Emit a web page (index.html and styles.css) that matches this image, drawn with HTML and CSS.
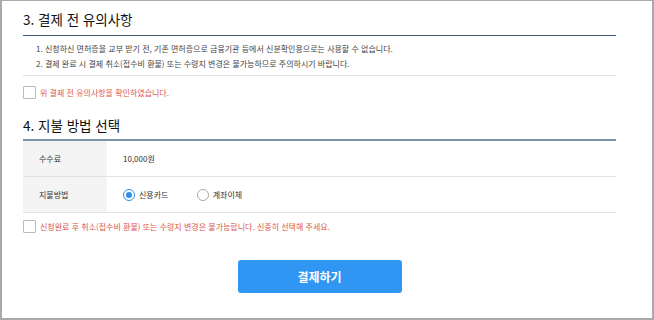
FILE: index.html
```html
<!DOCTYPE html>
<html lang="ko">
<head>
  <meta charset="UTF-8">
  <title>결제</title>
  <link rel="stylesheet" href="styles.css">
</head>
<body>
<div class="frame">
  <div class="section">
    <h2 class="title">3. 결제 전 유의사항</h2>
    <ol class="notice">
      <li>1. 신청하신 면허증을 교부 받기 전, 기존 면허증으로 금융기관 등에서 신분확인용으로는 사용할 수 없습니다.</li>
      <li>2. 결제 완료 시 결제 취소(접수비 환불) 또는 수령지 변경은 불가능하므로 주의하시기 바랍니다.</li>
    </ol>
    <label class="agree"><span class="box"></span>위 결제 전 유의사항을 확인하였습니다.</label>
  </div>

  <div class="section">
    <h2 class="title plain">4. 지불 방법 선택</h2>
    <table class="pay">
      <tr>
        <th>수수료</th>
        <td>10,000원</td>
      </tr>
      <tr>
        <th>지불방법</th>
        <td>
          <span class="radio on"></span><span class="opt">신용카드</span>
          <span class="radio"></span><span class="opt">계좌이체</span>
        </td>
      </tr>
    </table>
    <label class="agree second"><span class="box"></span>신청완료 후 취소(접수비 환불) 또는 수령지 변경은 불가능합니다. 신중히 선택해 주세요.</label>
  </div>

  <div class="actions">
    <button class="btn">결제하기</button>
  </div>
</div>
</body>
</html>
```

FILE: styles.css
```css
body {
  margin: 0;
  font-family: "Noto Sans CJK KR", "Noto Sans", sans-serif;
  color: #333;
  background: #fff;
}
.frame {
  box-sizing: border-box;
  width: 654px;
  height: 320px;
  border: 2px solid #a9a9a9;
  border-top-width: 1px;
  padding: 0 36px 0 21px;
}
.title {
  margin: 0;
  padding: 8px 0 6px;
  font-size: 13.5px;
  font-weight: 400;
  line-height: 20px;
  color: #111;
  border-bottom: 1px solid #3e5877;
}
.title.plain {
  margin-top: 8px;
  padding-bottom: 4px;
  border-bottom: none;
}
.notice {
  list-style: none;
  margin: 0;
  padding: 5px 0 4px 13px;
  border-bottom: 1px solid #e0e0e0;
}
.notice li {
  font-size: 8px;
  line-height: 15px;
  color: #444;
}
.agree {
  display: flex;
  align-items: center;
  margin-top: 10px;
  font-size: 8px;
  color: #e0574c;
}
.agree.second {
  margin-top: 7px;
}
.box {
  width: 11px;
  height: 11px;
  border: 1px solid #bbb;
  background: #fff;
  margin-right: 4px;
  border-radius: 1px;
}
.pay {
  width: 100%;
  border-collapse: collapse;
  border-top: 2px solid #7a93ac;
}
.pay th,
.pay td {
  height: 35px;
  padding: 0;
  font-size: 8px;
  font-weight: normal;
  color: #333;
  text-align: left;
  border-bottom: 1px solid #e2e2e2;
}
.pay th {
  width: 84px;
  padding-left: 16px;
  box-sizing: border-box;
  background: #f4f4f4;
}
.pay td {
  padding-left: 16px;
}
.radio {
  display: inline-block;
  vertical-align: middle;
  box-sizing: border-box;
  width: 12px;
  height: 12px;
  border: 1px solid #aaa;
  border-radius: 50%;
  margin-right: 4px;
  position: relative;
}
.radio.on {
  border-color: #2f8ee8;
}
.radio.on::after {
  content: "";
  position: absolute;
  left: 2px;
  top: 2px;
  width: 6px;
  height: 6px;
  border-radius: 50%;
  background: #2f8ee8;
}
.opt {
  vertical-align: middle;
  margin-right: 26px;
}
.actions {
  display: flex;
  justify-content: center;
  margin-top: 27px;
}
.btn {
  width: 164px;
  height: 33px;
  border: none;
  border-radius: 3px;
  background: #2f97f3;
  color: #fff;
  font-family: inherit;
  font-size: 12px;
  font-weight: 700;
}
```
